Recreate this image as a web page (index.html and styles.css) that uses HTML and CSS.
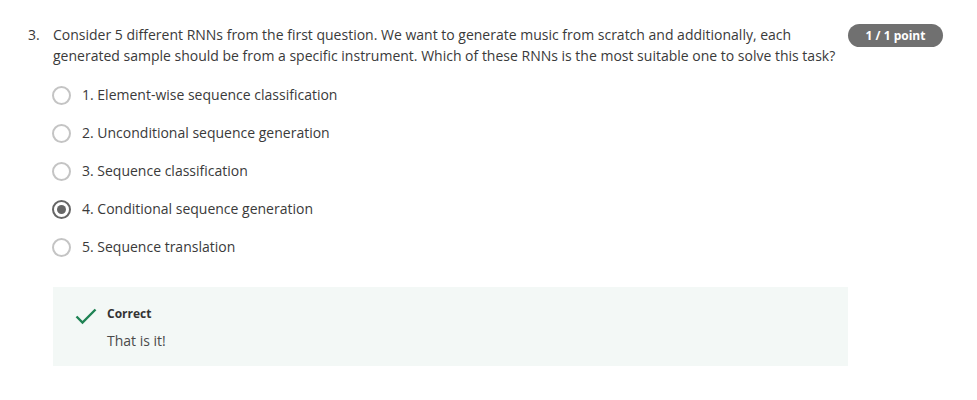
FILE: index.html
```html
<!DOCTYPE html>
<html lang="en">
<head>
<meta charset="utf-8">
<title>Quiz question</title>
<link rel="stylesheet" href="styles.css">
</head>
<body>
<div class="question">
  <div class="q-head">
    <div class="q-num">3.</div>
    <div class="q-text">Consider 5 different RNNs from the first question. We want to generate music from scratch and additionally, each generated sample should be from a specific instrument. Which of these RNNs is the most suitable one to solve this task?</div>
    <div class="badge">1 / 1 point</div>
  </div>
  <ul class="options">
    <li class="option"><span class="radio"></span><span class="label">1. Element-wise sequence classification</span></li>
    <li class="option"><span class="radio"></span><span class="label">2. Unconditional sequence generation</span></li>
    <li class="option"><span class="radio"></span><span class="label">3. Sequence classification</span></li>
    <li class="option"><span class="radio checked"></span><span class="label">4. Conditional sequence generation</span></li>
    <li class="option"><span class="radio"></span><span class="label">5. Sequence translation</span></li>
  </ul>
  <div class="feedback">
    <svg class="check" width="22" height="17" viewBox="0 0 22 17"><path d="M1.5 8.5 L7.5 14.5 L20.5 1.5" fill="none" stroke="#1f8354" stroke-width="2.4"/></svg>
    <div class="fb-body">
      <div class="fb-title">Correct</div>
      <div class="fb-text">That is it!</div>
    </div>
  </div>
</div>
</body>
</html>
```
FILE: styles.css
```css
html, body {
  margin: 0;
  padding: 0;
  background: #ffffff;
}
body {
  font-family: "Open Sans", "Liberation Sans", sans-serif;
  font-size: 14px;
  line-height: 20px;
  color: #3a3a3a;
}
.question {
  padding: 25px 34px 0 28px;
}
.q-head {
  display: flex;
  align-items: flex-start;
}
.q-num {
  width: 25px;
  flex: none;
}
.q-text {
  flex: 1;
  line-height: 21px;
  margin-top: -1px;
}
.badge {
  flex: none;
  margin-left: 8px;
  margin-top: -1px;
  width: 95px;
  height: 23px;
  border-radius: 12px;
  background: #707070;
  color: #ffffff;
  font-size: 12px;
  font-weight: 700;
  line-height: 23px;
  text-align: center;
}
.options {
  list-style: none;
  margin: 10px 0 0 25px;
  padding: 0;
}
.option {
  display: flex;
  align-items: center;
  height: 38px;
}
.radio {
  box-sizing: border-box;
  width: 19px;
  height: 19px;
  margin-left: -1px;
  border: 2px solid #c4c4c4;
  border-radius: 50%;
  display: flex;
  align-items: center;
  justify-content: center;
  flex: none;
}
.radio.checked {
  border-color: #666666;
}
.radio.checked::after {
  content: "";
  width: 9px;
  height: 9px;
  border-radius: 50%;
  background: #666666;
}
.label {
  margin-left: 11px;
}
.feedback {
  margin: 21px 95px 0 25px;
  background: #f3f8f6;
  display: flex;
  align-items: flex-start;
  padding: 18px 22px 15px 22px;
}
.check {
  flex: none;
  margin-top: 3px;
}
.fb-body {
  margin-left: 10px;
}
.fb-title {
  font-size: 12px;
  font-weight: 700;
  line-height: 18px;
  color: #333333;
}
.fb-text {
  margin-top: 8px;
  color: #4a4a4a;
}
```
